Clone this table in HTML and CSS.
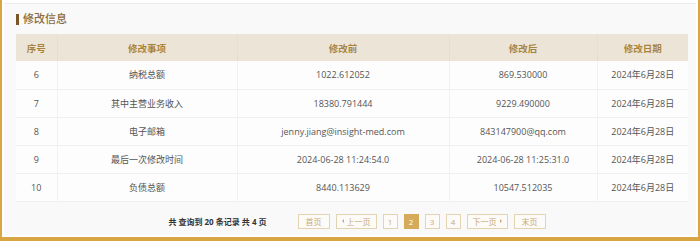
FILE: index.html
```html
<!DOCTYPE html>
<html lang="zh">
<head>
<meta charset="utf-8">
<link rel="stylesheet" href="styles.css">
</head>
<body>
<div class="frame">
  <div class="panel">
    <h2 class="title">修改信息</h2>
    <table class="grid">
      <colgroup>
        <col class="c1"><col class="c2"><col class="c3"><col class="c4"><col class="c5">
      </colgroup>
      <thead>
        <tr><th>序号</th><th>修改事项</th><th>修改前</th><th>修改后</th><th>修改日期</th></tr>
      </thead>
      <tbody>
        <tr><td>6</td><td>纳税总额</td><td>1022.612052</td><td>869.530000</td><td>2024年6月28日</td></tr>
        <tr><td>7</td><td>其中主营业务收入</td><td>18380.791444</td><td>9229.490000</td><td>2024年6月28日</td></tr>
        <tr><td>8</td><td>电子邮箱</td><td>jenny.jiang@insight-med.com</td><td>843147900@qq.com</td><td>2024年6月28日</td></tr>
        <tr><td>9</td><td>最后一次修改时间</td><td>2024-06-28 11:24:54.0</td><td>2024-06-28 11:25:31.0</td><td>2024年6月28日</td></tr>
        <tr><td>10</td><td>负债总额</td><td>8440.113629</td><td>10547.512035</td><td>2024年6月28日</td></tr>
      </tbody>
    </table>
    <div class="pager">
      <span class="summary">共 查询到 20 条记录 共 4 页</span>
      <div class="pages">
        <span class="btn">首页</span>
        <span class="btn arrow"><i class="tri tri-l"></i>上一页</span>
        <span class="btn num">1</span>
        <span class="btn num active">2</span>
        <span class="btn num">3</span>
        <span class="btn num">4</span>
        <span class="btn arrow">下一页<i class="tri tri-r"></i></span>
        <span class="btn">末页</span>
      </div>
    </div>
  </div>
</div>
</body>
</html>
```
FILE: styles.css
```css
* { box-sizing: border-box; }
html, body { margin: 0; padding: 0; background: #ffffff; }
body {
  font-family: "Open Sans", "Noto Sans CJK SC", sans-serif;
  width: 700px;
  height: 241px;
  overflow: hidden;
}
.frame {
  height: 241px;
  border-left: 2px solid #d8a743;
  border-right: 2px solid #d8a743;
  border-bottom: 4px solid #d8a743;
  padding: 3px 2px 2px 2px;
  background: #ffffff;
}
.panel {
  height: 100%;
  background: #f9f9f9;
  border-top: 1px solid #ececec;
  padding: 9px 8px 0 12px;
}
.title {
  margin: 0 0 9px 0;
  font-size: 11px;
  line-height: 12px;
  font-weight: 500;
  color: #8a6a3a;
  display: flex;
  align-items: center;
  gap: 4px;
}
.title::before {
  content: "";
  width: 3px;
  height: 11px;
  background: #7a5526;
}
.grid {
  width: 672px;
  border-collapse: collapse;
  table-layout: fixed;
  font-size: 9px;
}
.c1 { width: 41px; }
.c2 { width: 180px; }
.c3 { width: 212px; }
.c4 { width: 148px; }
.c5 { width: 91px; }
.grid th {
  height: 27px;
  background: #ece4d6;
  color: #a9843f;
  font-weight: 700;
  font-size: 9.5px;
  border-right: 1px solid #e6dece;
  padding: 0;
}
.grid td {
  height: 28px;
  background: #fdfdfd;
  color: #555555;
  text-align: center;
  border-bottom: 1px solid #f0f0f0;
  border-right: 1px solid #f1f1f1;
  padding: 0;
}
.grid th:last-child, .grid td:last-child { border-right: none; }
.pager {
  margin-top: 12px;
  display: flex;
  align-items: center;
  justify-content: center;
  gap: 31px;
  padding-left: 10px;
}
.summary {
  font-size: 8px;
  font-weight: 700;
  color: #333333;
}
.pages {
  display: flex;
  gap: 6px;
}
.btn {
  height: 15px;
  padding: 0 7px;
  border: 1px solid #e3d3b3;
  background: #fcfbf8;
  color: #c9a978;
  font-size: 8px;
  display: flex;
  align-items: center;
}
.btn.arrow { padding: 0 5px; }
.btn.num {
  width: 15px;
  padding: 0;
  justify-content: center;
}
.btn.active {
  background: #d5aa5a;
  border-color: #d5aa5a;
  color: #ffffff;
}
.tri {
  width: 0;
  height: 0;
  border-top: 2px solid transparent;
  border-bottom: 2px solid transparent;
}
.tri-l { border-right: 2px solid #c9a978; margin-right: 3px; }
.tri-r { border-left: 2px solid #c9a978; margin-left: 3px; }
```
